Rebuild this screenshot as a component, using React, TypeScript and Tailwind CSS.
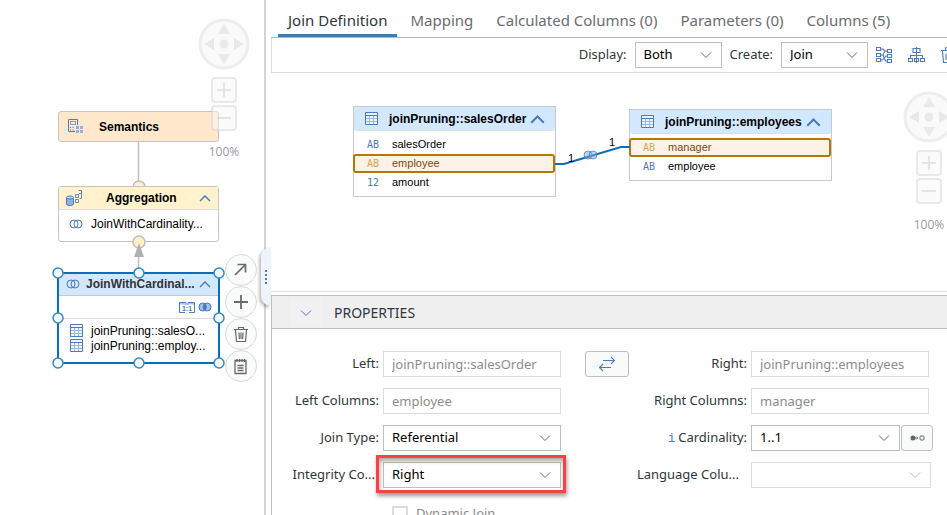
import React, { useState } from "react";

const BLUE = "#4d79bd";

function Venn({ filled = false }: { filled?: boolean }) {
  return (
    <svg viewBox="0 0 14 10" width="14" height="10" className="shrink-0" aria-hidden="true">
      <circle cx="5" cy="5" r="4" fill={filled ? "#a3c0e8" : "none"} stroke={BLUE} />
      <circle cx="9" cy="5" r="4" fill={filled ? "#a3c0e8" : "none"} stroke={BLUE} />
      {filled && <path d="M7 1.500a4.400 4.400 0 0 1 0 7a4.400 4.400 0 0 1 0-7Z" fill="#4776bd" />}
    </svg>
  );
}

function TableIcon() {
  return (
    <svg viewBox="0 0 13 13" width="13" height="13" className="shrink-0" fill="none" aria-hidden="true">
      <rect x=".5" y=".5" width="12" height="12" fill="#eef4fc" />
      <path d="M1 6.500h11M1 9.500h11M4.500 4v8M8.500 4v8" stroke="#9db9e3" />
      <path d="M.5.5h12v12H.5zM.5 3.500h12" stroke={BLUE} />
    </svg>
  );
}

function Chevron({ up = false, color = BLUE, size = 12, weight = 1 }: { up?: boolean; color?: string; size?: number; weight?: number }) {
  return (
    <svg viewBox="0 0 12 8" width={size} height={(size * 2) / 3} fill="none" stroke={color} strokeWidth={weight} className="shrink-0" aria-hidden="true">
      <path d={up ? "M1 7 6 2l5 5" : "M1 1.500 6 6.500l5-5"} />
    </svg>
  );
}

function SemanticsIcon() {
  return (
    <svg viewBox="0 0 16 15" width="16" height="15" fill="none" aria-hidden="true">
      <path d="M7 12.500H.5V.5h9V6" stroke={BLUE} />
      <rect x="2.500" y="2.500" width="5" height="3" stroke="#7fa3dc" />
      <path d="M2 8h1v1H2zM4.500 8h1v1h-1zM2 10.500h1v1H2zM4.500 10.500h1v1h-1z" fill={BLUE} />
      <path d="M8 7h3v3H8zM12 7h3v3h-3zM8 11h3v3H8zM12 11h3v3h-3z" fill="#92b0e2" />
    </svg>
  );
}

function AggregationIcon() {
  return (
    <svg viewBox="0 0 17 16" width="17" height="16" fill="none" stroke={BLUE} aria-hidden="true">
      <path d="M.5 7.500v6.500c0 2 7 2 7 0V7.500" fill="#92b0e2" />
      <ellipse cx="4" cy="7.500" rx="3.500" ry="1.500" fill="#c8d9f2" />
      <path d="M9.500 4.500h3v3h-3zM9.500 9.500h3v3h-3z" strokeWidth=".9" />
      <path d="M12.500 .5h3v8h-2M13 3.500h2.500" strokeWidth=".9" />
    </svg>
  );
}

function CardinalityIcon() {
  return (
    <svg viewBox="0 0 16 11" width="16" height="11" fill="none" aria-hidden="true">
      <path d="M6 10.500H.5V.5H7v2.500M9 3V.5h6.500v10H10" stroke={BLUE} />
      <path d="M1 1h6v1.500H1zM9 1h6v1.500H9z" fill="#a8c1ea" />
      <text x="8" y="9" textAnchor="middle" fill={BLUE} fontSize="7" fontWeight="bold" fontFamily="Liberation Sans, sans-serif">1:1</text>
    </svg>
  );
}

function Navigator() {
  return (
    <div className="flex w-[52px] flex-col items-center font-['Open_Sans',sans-serif] text-[#9a9a9a]">
      <svg viewBox="0 0 52 52" width="52" height="52" role="img" aria-label="Pan">
        <circle cx="26" cy="26" r="24" fill="#f9f9f9" fillOpacity=".8" stroke="#ededed" strokeWidth="3" />
        <path d="M26 6l6 10H20zM26 46l6-10H20zM6 26l10-6v12zM46 26l-10-6v12z" fill="#e9e9e9" />
        <circle cx="26" cy="26" r="4.500" fill="#e9e9e9" />
      </svg>
      <button aria-label="Zoom in" className="mt-[7px] flex size-[26px] items-center justify-center rounded border-2 border-[#a0a0a0]/20 bg-[#f8f8f8]/50">
        <svg viewBox="0 0 16 16" width="16" height="16"><path d="M8 1v14M1 8h14" stroke="#a0a0a0" strokeOpacity=".25" strokeWidth="2" /></svg>
      </button>
      <button aria-label="Zoom out" className="mt-[2px] flex size-[26px] items-center justify-center rounded border-2 border-[#a0a0a0]/20 bg-[#f8f8f8]/50">
        <svg viewBox="0 0 16 16" width="16" height="16"><path d="M1 8h14" stroke="#a0a0a0" strokeOpacity=".25" strokeWidth="2" /></svg>
      </button>
      <span className="mt-[11px] text-[12px] leading-5">100%</span>
    </div>
  );
}

const handles = [
  [58, 273], [139, 273], [219, 273], [58, 318],
  [219, 318], [58, 363], [139, 363], [219, 363],
];

const actions = [
  { name: "Open", icon: <path d="M4 15 13.500 5.500M6.500 4.500h8v8" strokeWidth="1.700" /> },
  { name: "Add", icon: <path d="M10 3v14M3 10h14" strokeWidth="1.800" /> },
  {
    name: "Delete",
    icon: <path d="M3 5.500h14M7.500 5V3.500h5V5M4.500 6l1 11.500h9l1-11.500M8 8.500l.4 6.500M10 8.500V15M12 8.500l-.4 6.500" strokeWidth="1.200" />,
  },
  {
    name: "Copy",
    icon: <path d="M4 4.500h11v13H4zM6 3v3M8.500 3v3M11 3v3M13.500 3v3M6.500 9.500h6M6.500 12h6M6.500 14.500h6" strokeWidth="1.300" />,
  },
];

function FlowCanvas() {
  return (
    <section aria-label="View scenario" className="relative w-[264px] shrink-0 font-['Liberation_Sans',Arial,sans-serif] text-[12px] text-black">
      <svg className="absolute inset-0 h-full w-full" fill="none" stroke="#bfbfbf" aria-hidden="true">
        <path d="M138.500 142v44M138.500 250v24" strokeWidth="1.500" />
        <circle cx="139" cy="187" r="6" fill="#fff0c8" strokeWidth="1.500" />
      </svg>

      <div className="absolute left-[58px] top-[111px] flex h-[31px] w-[161px] items-center rounded-[3px] border border-[#c4c4c4] bg-[#ffe8cc] pl-[9px] font-bold">
        <SemanticsIcon />
        <span className="ml-[15px]">Semantics</span>
      </div>

      <div className="absolute left-[58px] top-[186px] h-[56px] w-[161px] rounded-[3px] border border-[#c4c4c4] bg-white">
        <div className="flex h-[23px] items-center border-b border-[#ddd] bg-[#fff2cc] pl-[7px] pr-[7px] font-bold">
          <AggregationIcon />
          <span className="flex-1 pl-[23px]">Aggregation</span>
          <button aria-label="Collapse Aggregation"><Chevron up weight={1.5} /></button>
        </div>
        <div className="flex h-7 items-center gap-2 pl-[10px]">
          <Venn />
          <span>JoinWithCardinality...</span>
        </div>
      </div>

      <div className="absolute left-[57px] top-[272px] h-[92px] w-[163px] border-2 border-[#0a6fb4] bg-white">
        <div className="flex h-[22px] items-center border-b border-[#c8c8c8] bg-[#d1e8ff] pb-px pl-[7px] pr-[7px] font-bold text-[#333]">
          <Venn />
          <span className="flex-1 pl-[6px]">JoinWithCardinal...</span>
          <button aria-label="Collapse join"><Chevron up weight={1.3} /></button>
        </div>
        <div className="flex h-[23px] items-center justify-end gap-[3px] border-b border-[#ddd] pr-[6px]">
          <CardinalityIcon />
          <Venn filled />
        </div>
        <ul className="pl-[11px] pt-1">
          {["joinPruning::salesO...", "joinPruning::employ..."].map((t) => (
            <li key={t} className="flex h-[15px] items-center gap-2"><TableIcon />{t}</li>
          ))}
        </ul>
      </div>

      <svg className="pointer-events-none absolute inset-0 h-full w-full" aria-hidden="true">
        <circle cx="139" cy="242" r="6" fill="#fff0c8" stroke="#bfbfbf" strokeWidth="1.500" />
        <path d="M139 243l5 14h-10z" fill="#b0b0b0" />
        {handles.map(([x, y]) => (
          <circle key={`${x}-${y}`} cx={x} cy={y} r="5" fill="#f5f8fa" stroke="#318bc5" strokeWidth="1.500" />
        ))}
      </svg>

      <div className="absolute left-[225px] top-[254px] flex flex-col">
        {actions.map((a) => (
          <button key={a.name} aria-label={a.name} className="flex size-8 items-center justify-center rounded-full border border-[#d8d8d8] bg-[#fafcfc]">
            <svg viewBox="0 0 20 20" width="20" height="20" fill="none" stroke="#666a6d">{a.icon}</svg>
          </button>
        ))}
      </div>

      <div className="absolute left-[198px] top-[18px]"><Navigator /></div>
    </section>
  );
}

type Row = { type: string; name: string; selected?: boolean };

function SourceTable({ name, rows, className }: { name: string; rows: Row[]; className: string }) {
  return (
    <div className={`absolute w-[203px] border border-[#c9c9c9] bg-white pb-1 ${className}`}>
      <div className="flex h-[24px] items-center rounded-b-[3px] border-b border-[#ddd] bg-[#d1e8ff] pl-[11px] pr-[10px] font-bold">
        <TableIcon />
        <span className="flex-1 pl-[11px]">{name}</span>
        <button aria-label={`Collapse ${name}`}><Chevron up size={15} weight={1.6} /></button>
      </div>
      <ul className="pt-1 text-[11px]">
        {rows.map((r) => (
          <li
            key={r.name}
            className={
              r.selected
                ? "-ml-px flex h-[19px] items-center rounded-[3px] border-2 border-[#b07a00] bg-[#fef2e6] pl-3 text-[#7c4a14]"
                : "flex h-[19px] items-center pl-[13px]"
            }
          >
            <span
              className={
                r.selected
                  ? "w-[25px] font-['DejaVu_Sans_Mono',monospace] text-[10px] leading-none text-[#d0a75b]"
                  : "w-[25px] font-['DejaVu_Sans_Mono',monospace] text-[10px] leading-none text-[#4d79bd]"
              }
            >
              {r.type}
            </span>
            {r.name}
          </li>
        ))}
      </ul>
    </div>
  );
}

function JoinCanvas() {
  return (
    <section aria-label="Join diagram" className="relative h-[219px] shrink-0 border-b border-[#dcdcdc] font-['Liberation_Sans',Arial,sans-serif] text-[12px] text-black">
      <SourceTable
        name="joinPruning::salesOrder"
        className="left-[82px] top-[33px]"
        rows={[
          { type: "AB", name: "salesOrder" },
          { type: "AB", name: "employee", selected: true },
          { type: "12", name: "amount" },
        ]}
      />
      <SourceTable
        name="joinPruning::employees"
        className="left-[358px] top-[36px]"
        rows={[
          { type: "AB", name: "manager", selected: true },
          { type: "AB", name: "employee" },
        ]}
      />
      <svg className="pointer-events-none absolute inset-0 h-full w-full" aria-hidden="true">
        <path d="M284 91h9l57-17h9" fill="none" stroke="#0a6fb4" strokeWidth="2" />
        <circle cx="317" cy="82" r="4" fill="#7ea3dd" fillOpacity=".5" stroke="#4776bd" strokeOpacity=".7" />
        <circle cx="322" cy="82" r="4" fill="#7ea3dd" fillOpacity=".5" stroke="#4776bd" strokeOpacity=".7" />
        <text x="297" y="89" fontSize="11">1</text>
        <text x="338" y="73" fontSize="11">1</text>
      </svg>
      <div className="absolute left-[632px] top-[18px]"><Navigator /></div>
    </section>
  );
}

const tabs = ["Join Definition", "Mapping", "Calculated Columns (0)", "Parameters (0)", "Columns (5)"];

function Tabs() {
  const [active, setActive] = useState(tabs[0]);
  return (
    <div role="tablist" className="flex h-[38px] shrink-0 gap-[3px] border-b border-[#b5b5b5] pl-[7px] text-[15px] text-[#6a6d70]">
      {tabs.map((t) => (
        <button
          key={t}
          role="tab"
          aria-selected={t === active}
          onClick={() => setActive(t)}
          className={
            t === active
              ? "whitespace-nowrap border-b-[3px] border-[#427cac] px-[10px] pt-[6px] text-[#32363a]"
              : "whitespace-nowrap border-b-[3px] border-transparent px-[10px] pt-[6px]"
          }
        >
          {t}
        </button>
      ))}
    </div>
  );
}

function Dropdown({ id, options, className, disabled = false }: { id: string; options: string[]; className: string; disabled?: boolean }) {
  return (
    <div className={`relative h-[26px] ${className}`}>
      <select
        id={id}
        disabled={disabled}
        className="h-full w-full appearance-none border border-[#bfbfbf] bg-white pl-2 pr-8 text-black outline-none disabled:border-[#dcdcdc] disabled:opacity-100"
      >
        {options.map((o) => <option key={o}>{o}</option>)}
      </select>
      <span className="pointer-events-none absolute inset-y-0 right-[10px] flex items-center">
        <Chevron color={disabled ? "#a9bac9" : "#4f6d8a"} />
      </span>
    </div>
  );
}

function Toolbar() {
  return (
    <div className="h-[35px] shrink-0 border-b border-l border-[#dcdcdc]">
      <div className="-mr-2 flex h-full items-center justify-end text-[13px] text-[#32363a]">
        <label htmlFor="display" className="mr-2">Display:</label>
        <Dropdown id="display" options={["Both", "Left", "Right"]} className="w-[87px]" />
        <label htmlFor="create" className="ml-2 mr-2">Create:</label>
        <Dropdown id="create" options={["Join", "Union"]} className="w-[87px]" />
        <button aria-label="Auto layout horizontal" className="ml-2">
          <svg viewBox="0 0 17 16" width="17" height="16" fill="none" stroke={BLUE} strokeWidth="1.100">
            <path d="M.5.5h4v3h-4zM.5 6.500h4v3h-4zM.5 11.500h4v3h-4zM11.500 2.500h4v3h-4zM11.500 7.500h4v3h-4zM11.500 12.500h4v3h-4zM5 2h2l2 2h2.500M5 8h2l2-4M5 13h1.500L10 9h1.500M7 8l2.500 6h2" />
          </svg>
        </button>
        <button aria-label="Auto layout vertical" className="ml-[15px]">
          <svg viewBox="0 0 17 16" width="17" height="16" fill="none" stroke={BLUE} strokeWidth="1.100">
            <path d="M5 1.500h7v4H5zM.5 11.500h4v3h-4zM6.500 11.500h4v3h-4zM12.500 11.500h4v3h-4zM8.500 0v16M2.500 11V8.500h12V11" />
          </svg>
        </button>
        <button aria-label="Delete" className="ml-4">
          <svg viewBox="0 0 14 16" width="14" height="16" fill="none" stroke={BLUE} strokeWidth="1.100">
            <path d="M0 3.500h14M4.500 3V.8h5V3M1.500 4l1 11.500h9l1-11.500M5 6.500V13M9 6.500V13" />
          </svg>
        </button>
      </div>
    </div>
  );
}

const labelCls = "mr-1 shrink-0 text-right whitespace-nowrap";
const inputCls = "h-[26px] w-[178px] border border-[#dcdcdc] bg-white pl-2 pr-2 text-[#8c8c8c] outline-none";

function Properties() {
  return (
    <section className="mt-[3px] flex-1 border-l border-t border-[#bfbfbf]">
      <header className="flex h-[33px] items-center border-b border-[#bfbfbf] bg-[#efefef] pt-px text-[14px] text-[#32363a]">
        <button aria-label="Collapse properties" className="ml-[18px] flex h-7 w-8 items-center justify-center bg-[#f1f1f1]">
          <Chevron size={12} />
        </button>
        <h2 className="ml-3">PROPERTIES</h2>
      </header>
      <form className="grid grid-cols-[289px_68px_300px] gap-y-[11px] pt-[22px] text-[13px] text-[#32363a]">
        <div className="flex items-center justify-end">
          <label htmlFor="left" className={labelCls}>Left:</label>
          <input id="left" readOnly value="joinPruning::salesOrder" className={inputCls} />
        </div>
        <div className="flex items-center justify-end">
          <button type="button" aria-label="Swap tables" className="flex h-[26px] w-11 items-center justify-center rounded-[3px] border border-[#bfbfbf] bg-[#f9fbfb]">
            <svg viewBox="0 0 16 16" width="16" height="16" fill="none" stroke={BLUE} strokeWidth="1.100">
              <path d="M4 4.500h11.500M12 1l3.500 3.500L12 8M12 11.500H.5M4 8 .5 11.500 4 15" />
            </svg>
          </button>
        </div>
        <div className="flex items-center justify-end">
          <label htmlFor="right" className={labelCls}>Right:</label>
          <input id="right" readOnly value="joinPruning::employees" className={inputCls} />
        </div>

        <div className="flex items-center justify-end">
          <label htmlFor="leftColumns" className={labelCls}>Left Columns:</label>
          <input id="leftColumns" readOnly value="employee" className={inputCls} />
        </div>
        <div className="col-start-3 flex items-center justify-end">
          <label htmlFor="rightColumns" className={labelCls}>Right Columns:</label>
          <input id="rightColumns" readOnly value="manager" className={inputCls} />
        </div>

        <div className="flex items-center justify-end">
          <label htmlFor="joinType" className={labelCls}>Join Type:</label>
          <Dropdown id="joinType" options={["Referential", "Inner", "Left Outer"]} className="w-[178px]" />
        </div>
        <div className="col-start-3 -mr-1 flex items-center justify-end">
          <label htmlFor="cardinality" className={labelCls}>
            <span className="mr-[3px] font-['Liberation_Mono',monospace] text-[12px] text-[#4d79bd]">i</span>
            Cardinality:
          </label>
          <Dropdown id="cardinality" options={["1..1", "1..n", "n..1"]} className="w-[149px]" />
          <button type="button" aria-label="Propose cardinality" className="ml-px flex h-[26px] w-8 items-center justify-center rounded-[3px] border border-[#bfbfbf] bg-[#f9fbfb]">
            <svg viewBox="0 0 15 6" width="15" height="6" fill="none" stroke="#5f6467">
              <circle cx="3" cy="3" r="2.500" fill="#5f6467" stroke="none" />
              <path d="M5 3h3M6.500 1.500 8 3 6.500 4.500" strokeWidth=".8" />
              <rect x="10" y="1" width="4" height="4" rx="1" />
            </svg>
          </button>
        </div>

        <div className="flex items-center justify-end">
          <label htmlFor="integrity" className="mr-2 shrink-0 whitespace-nowrap">Integrity Co...</label>
          <div className="relative">
            <Dropdown id="integrity" options={["Right", "Left", "Both"]} className="w-[178px]" />
            <span className="pointer-events-none absolute -bottom-[5px] -left-[7px] -right-[5px] -top-[7px] border-[3px] border-[#f54343] shadow-[1px_3px_4px_rgba(0,0,0,0.4),inset_1px_3px_4px_rgba(0,0,0,0.35)]" />
          </div>
        </div>
        <div className="col-start-3 -mr-[2px] flex items-center justify-end">
          <label htmlFor="language" className="mr-3 whitespace-nowrap">Language Colu...</label>
          <Dropdown id="language" options={[""]} className="w-[180px]" disabled />
        </div>

        <div className="mt-[5px] flex items-center gap-2 pl-[120px] text-[#8c8c8c]">
          <input id="dynamic" type="checkbox" className="size-4 appearance-none border-2 border-[#dcdcdc] bg-white" />
          <label htmlFor="dynamic">Dynamic Join</label>
        </div>
      </form>
    </section>
  );
}

export default function App() {
  return (
    <div className="flex h-screen overflow-hidden bg-white font-['Noto_Sans',sans-serif]">
      <FlowCanvas />
      <div className="relative w-[7px] shrink-0 border-l-2 border-[#d4d4d4]">
        <button aria-label="Resize panels" className="absolute -left-[5px] top-[247px] flex h-[59px] w-[10px] items-center justify-center rounded-l-[10px] bg-[#eff3fa] shadow-[-2px_2px_3px_rgba(0,0,0,0.25)]">
          <svg viewBox="0 0 2 14" width="2" height="14" fill={BLUE}>
            <path d="M0 0h2v2H0zM0 4h2v2H0zM0 8h2v2H0zM0 12h2v2H0z" />
          </svg>
        </button>
      </div>
      <main className="flex min-w-0 flex-1 flex-col overflow-hidden">
        <Tabs />
        <Toolbar />
        <JoinCanvas />
        <Properties />
      </main>
    </div>
  );
}
